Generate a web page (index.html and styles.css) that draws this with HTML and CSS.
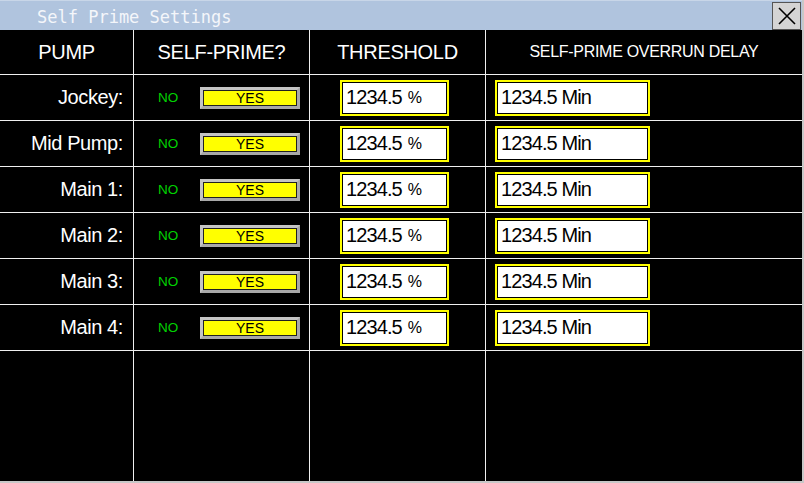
FILE: index.html
```html
<!DOCTYPE html>
<html lang="en">
<head>
  <meta charset="UTF-8" />
  <title>Self Prime Settings</title>
  <link rel="stylesheet" href="styles.css">
</head>
<body>

  <div class="window">
    <!-- Title bar -->
    <div class="titlebar">
      <span class="title">Self Prime Settings</span>
      <button class="close-btn" type="button">
        <svg width="18" height="18" viewBox="0 0 18 18">
          <path d="M1 1 L17 17 M17 1 L1 17" stroke="#000" stroke-width="1.6" fill="none"/>
        </svg>
      </button>
    </div>

    <!-- Settings table -->
    <div class="grid">
      <div class="cell head">PUMP</div>
      <div class="cell head">SELF-PRIME?</div>
      <div class="cell head">THRESHOLD</div>
      <div class="cell head head-small">SELF-PRIME OVERRUN DELAY</div>

      <div class="cell label">Jockey:</div>
      <div class="cell prime"><span class="no">NO</span><span class="yes-btn">YES</span></div>
      <div class="cell threshold"><div class="value-box short">1234.5<span class="unit">%</span></div></div>
      <div class="cell delay"><div class="value-box long">1234.5 Min</div></div>

      <div class="cell label">Mid Pump:</div>
      <div class="cell prime"><span class="no">NO</span><span class="yes-btn">YES</span></div>
      <div class="cell threshold"><div class="value-box short">1234.5<span class="unit">%</span></div></div>
      <div class="cell delay"><div class="value-box long">1234.5 Min</div></div>

      <div class="cell label">Main 1:</div>
      <div class="cell prime"><span class="no">NO</span><span class="yes-btn">YES</span></div>
      <div class="cell threshold"><div class="value-box short">1234.5<span class="unit">%</span></div></div>
      <div class="cell delay"><div class="value-box long">1234.5 Min</div></div>

      <div class="cell label">Main 2:</div>
      <div class="cell prime"><span class="no">NO</span><span class="yes-btn">YES</span></div>
      <div class="cell threshold"><div class="value-box short">1234.5<span class="unit">%</span></div></div>
      <div class="cell delay"><div class="value-box long">1234.5 Min</div></div>

      <div class="cell label">Main 3:</div>
      <div class="cell prime"><span class="no">NO</span><span class="yes-btn">YES</span></div>
      <div class="cell threshold"><div class="value-box short">1234.5<span class="unit">%</span></div></div>
      <div class="cell delay"><div class="value-box long">1234.5 Min</div></div>

      <div class="cell label">Main 4:</div>
      <div class="cell prime"><span class="no">NO</span><span class="yes-btn">YES</span></div>
      <div class="cell threshold"><div class="value-box short">1234.5<span class="unit">%</span></div></div>
      <div class="cell delay"><div class="value-box long">1234.5 Min</div></div>

      <div class="cell"></div>
      <div class="cell"></div>
      <div class="cell"></div>
      <div class="cell"></div>
    </div>
  </div>

</body>
</html>
```

FILE: styles.css
```css
body {
  margin: 0;
  padding: 0;
  background: #000;
  font-family: 'Liberation Sans', Arial, sans-serif;
}

.window {
  width: 804px;
  height: 483px;
  box-sizing: border-box;
  background: #000;
  border-right: 2px solid #c8c8c8;
  border-bottom: 2px solid #c8c8c8;
  display: flex;
  flex-direction: column;
}

.titlebar {
  height: 30px;
  flex: none;
  background: #b0c4de;
  border-top: 1px solid #c8d6e8;
  box-sizing: border-box;
  display: flex;
  align-items: center;
  justify-content: space-between;
}

.title {
  font-family: 'DejaVu Sans Mono', monospace;
  font-size: 17px;
  color: #f4f6fa;
  padding-left: 37px;
  padding-top: 2px;
}

.close-btn {
  width: 29px;
  height: 28px;
  margin-right: 1px;
  padding: 0;
  background: #d4d4d4;
  border: 1px solid #555;
  display: flex;
  align-items: center;
  justify-content: center;
}

.grid {
  flex: 1;
  display: grid;
  grid-template-columns: 133px 175px 175px 1fr;
  grid-template-rows: 44px repeat(6, 45px) 1fr;
  gap: 1px;
  background: #f0f0f0;
}

.cell {
  background: #000;
  display: flex;
  align-items: center;
  color: #fff;
}

.head {
  justify-content: center;
  font-size: 20px;
  letter-spacing: -0.3px;
}

.head-small {
  font-size: 16px;
  letter-spacing: -0.3px;
}

.label {
  justify-content: flex-end;
  padding-right: 10px;
  font-size: 20px;
  letter-spacing: -0.4px;
}

.prime {
  padding-left: 24px;
  gap: 23px;
}

.no {
  color: #00d200;
  font-size: 13.5px;
  width: 19px;
}

.yes-btn {
  width: 100px;
  height: 22px;
  box-sizing: border-box;
  border: 3px solid #a8a8a8;
  border-top-color: #c4c4c4;
  border-left-color: #c4c4c4;
  box-shadow: inset 0 0 0 1px #202020;
  background: #ffff00;
  color: #000;
  font-size: 14px;
  display: flex;
  align-items: center;
  justify-content: center;
}

.threshold {
  padding-left: 30px;
}

.delay {
  padding-left: 9px;
}

.value-box {
  height: 36px;
  box-sizing: border-box;
  border: 2px solid #ffff00;
  box-shadow: inset 0 0 0 1px #000;
  background: #fff;
  color: #000;
  font-size: 20px;
  letter-spacing: -0.9px;
  padding-left: 4px;
  display: flex;
  align-items: center;
}

.value-box.short {
  width: 109px;
}

.value-box.long {
  width: 155px;
}

.unit {
  font-size: 16px;
  margin-left: 6px;
}
```
